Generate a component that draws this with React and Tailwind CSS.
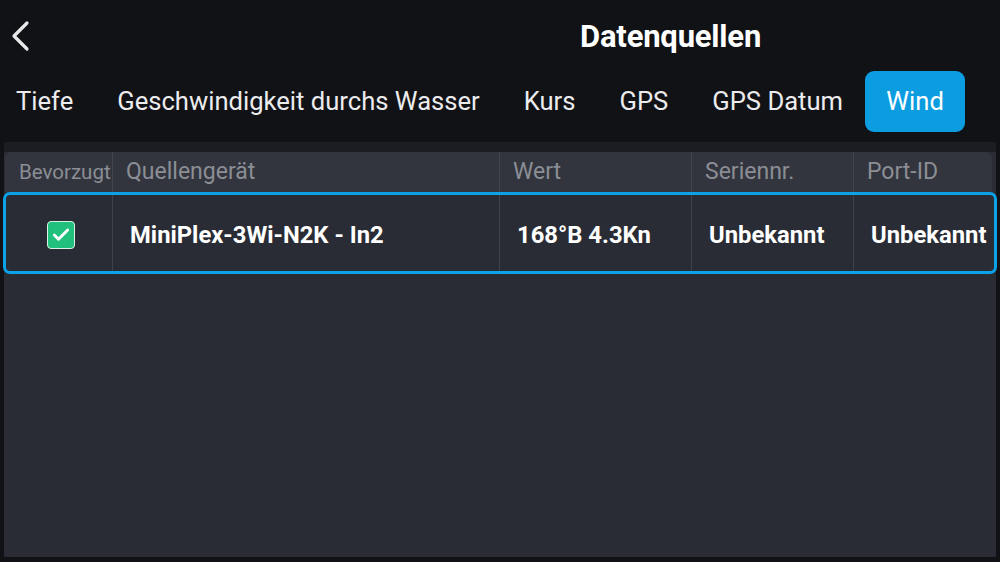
import { Check } from 'lucide-react';

const tabs = ['Tiefe', 'Geschwindigkeit durchs Wasser', 'Kurs', 'GPS', 'GPS Datum', 'Wind'];

const columns = [
  { label: 'Bevorzugt', width: 'w-[107px]', head: 'pl-[14px] text-[20.5px]' },
  { label: 'Quellengerät', width: 'w-[387px]', head: 'pl-[13px] text-[23px]' },
  { label: 'Wert', width: 'w-[192px]', head: 'pl-[13px] text-[23px]' },
  { label: 'Seriennr.', width: 'w-[162px]', head: 'pl-[13px] text-[23px]' },
  { label: 'Port-ID', width: 'w-[139px]', head: 'pl-[13px] text-[23px]' },
];

export default function App() {
  return (
    <div className="w-[1000px] h-[562px] bg-[#111216] flex flex-col font-['Roboto',sans-serif] overflow-hidden">
      {/* top bar */}
      <div className="h-[70px] flex items-center relative">
        <button className="ml-[8px] mt-[2px] text-white" aria-label="Zurück">
          <svg width="26" height="34" viewBox="0 0 26 34" fill="none">
            <path d="M19 4 L6 17 L19 30" stroke="#e8e8ea" strokeWidth="3.2" strokeLinecap="round" strokeLinejoin="round" />
          </svg>
        </button>
        <h1 className="absolute left-[580px] top-[14px] text-[31px] font-bold text-white tracking-[-0.2px]">
          Datenquellen
        </h1>
      </div>

      {/* tabs */}
      <div className="h-[61px] flex items-center pl-[16px] pt-[1px]">
        {tabs.map((t) => (
          <div
            key={t}
            className={
              t === 'Wind'
                ? 'h-[61px] w-[100px] ml-[-22px] flex items-center justify-center rounded-[9px] bg-[#0b9de0] text-white text-[25.6px]'
                : 'mr-[44px] text-[25.6px] text-[#ececee]'
            }
          >
            {t}
          </div>
        ))}
      </div>

      {/* table panel */}
      <div className="mt-[11px] mx-[4px] flex-1 mb-[5px] bg-[#1b1d22] pt-[10px] flex flex-col">
        <div className="flex-1 bg-[#292c34] flex flex-col">
          <div className="flex h-[40px] bg-[#32353d] rounded-t-[6px] ml-[1px] mr-[4px]">
            {columns.map((c, i) => (
              <div
                key={c.label}
                className={`${c.width} ${c.head} flex items-center text-[#8b8e95] whitespace-nowrap overflow-hidden pt-[1px] ${i > 0 ? 'border-l border-[#42454d]' : ''}`}
              >
                {c.label}
              </div>
            ))}
          </div>

          <div className="flex h-[82px] mx-[-1px] border-[3px] border-[#0ca2e8] rounded-[7px] text-white font-bold text-[23.8px] bg-[#292c34]">
            <div className="w-[106px] flex items-center justify-center pt-[3px]">
              <div className="w-[28px] h-[28px] rounded-[4px] bg-[#21c07c] border border-[#d8f3e6] flex items-center justify-center ml-[4px]">
                <Check className="w-[20px] h-[20px] text-white" strokeWidth={3.5} />
              </div>
            </div>
            <div className="w-[387px] border-l border-[#3f424a] flex items-center pl-[17px] pt-[5px]">MiniPlex-3Wi-N2K - In2</div>
            <div className="w-[192px] border-l border-[#3f424a] flex items-center pl-[17px] pt-[5px]">168°B 4.3Kn</div>
            <div className="w-[162px] border-l border-[#3f424a] flex items-center pl-[17px] pt-[5px]">Unbekannt</div>
            <div className="flex-1 border-l border-[#3f424a] flex items-center pl-[17px] pt-[5px] whitespace-nowrap overflow-hidden">Unbekannt</div>
          </div>
        </div>
      </div>
    </div>
  );
}
